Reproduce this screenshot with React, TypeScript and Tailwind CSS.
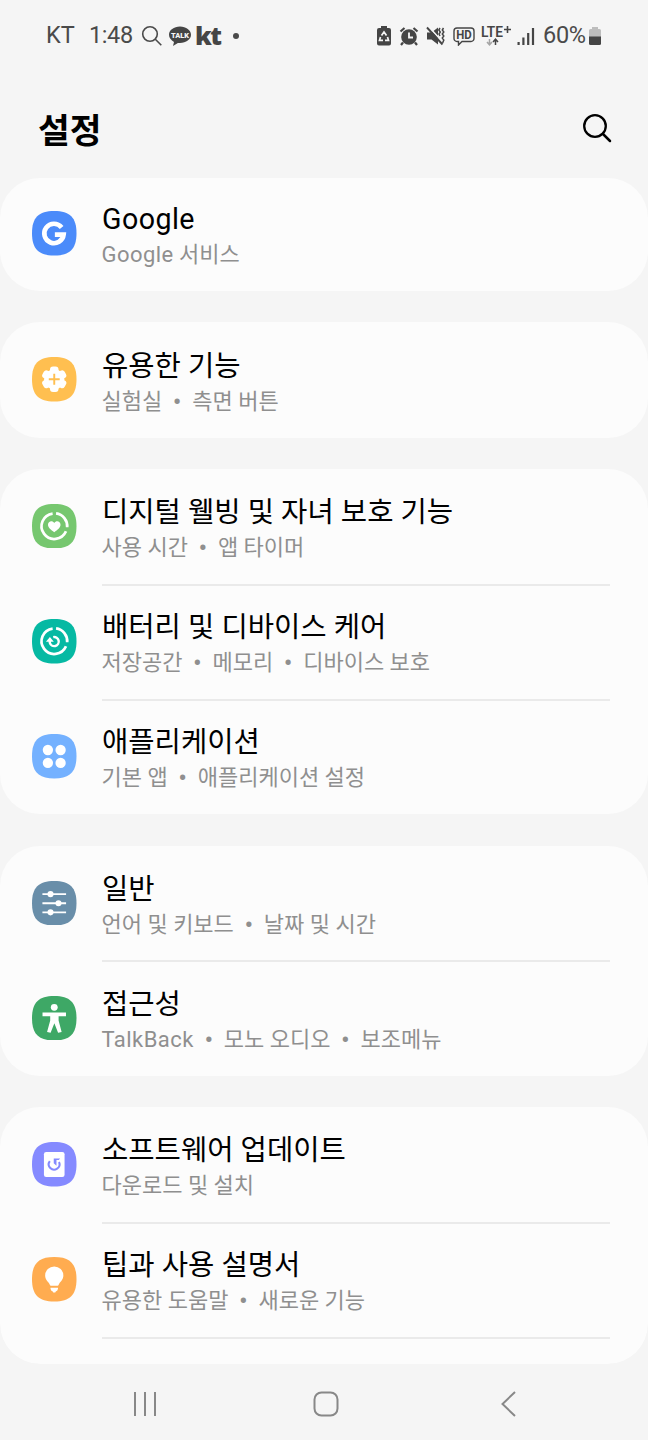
import type { ReactNode } from "react"

type SettingsItem = {
  title: string
  details: string[]
  color: string
  icon: ReactNode
}

const ring = (
  <g fill="none" stroke="#fff" strokeWidth="2.7">
    <path d="M20.4 9.500A12.600 12.600 0 1 0 33.600 27" />
    <path d="M23.800 9.300A12.800 12.800 0 0 1 34.800 23" />
  </g>
)

const googleIcon = (
  <path
    d="M29.300 16.300A9.600 9.600 0 1 0 31.300 23.300H22.600"
    fill="none"
    stroke="#fff"
    strokeWidth="4.6"
  />
)

const featuresIcon = (
  <>
    <g fill="#fff">
      <circle cx="22" cy="22" r="10" />
      <rect x="17.800" y="9.400" width="8.400" height="25.200" rx="3" />
      <rect x="17.800" y="9.400" width="8.400" height="25.200" rx="3" transform="rotate(60 22 22)" />
      <rect x="17.800" y="9.400" width="8.400" height="25.200" rx="3" transform="rotate(120 22 22)" />
    </g>
    <path d="M22 16.600v10.800M16.600 22h10.800" stroke="#ffbf50" strokeWidth="1.900" />
  </>
)

const wellbeingIcon = (
  <>
    {ring}
    <path
      d="M22 28c-3.2-2.3-6.2-4.600-6.200-7.400 0-3.700 4.400-4.700 6.200-1.800 1.800-2.900 6.200-1.900 6.200 1.800 0 2.800-3 5.100-6.200 7.400z"
      fill="#fff"
    />
  </>
)

const careIcon = (
  <>
    {ring}
    <path
      d="M21 17.900A4.500 4.500 0 1 1 17.600 23.500V21"
      fill="none"
      stroke="#fff"
      strokeWidth="2.4"
    />
    <path d="M13.800 22.600L17.700 17.800 21.600 22.600z" fill="#fff" />
  </>
)

const appsIcon = (
  <g fill="#fff">
    <circle cx="15.700" cy="15.800" r="5.100" />
    <circle cx="28.300" cy="15.800" r="5.100" />
    <circle cx="15.700" cy="28.600" r="5.100" />
    <circle cx="28.300" cy="28.600" r="5.100" />
  </g>
)

const generalIcon = (
  <g fill="#fff">
    <path
      d="M10.300 13H33.700M10.300 22H33.700M10.300 31H33.700"
      stroke="#fff"
      strokeWidth="1.800"
    />
    <circle cx="18.300" cy="13" r="3" />
    <circle cx="26.200" cy="22" r="3" />
    <circle cx="18.300" cy="31" r="3" />
  </g>
)

const accessibilityIcon = (
  <g fill="#fff">
    <circle cx="22" cy="11.200" r="3.400" />
    <path d="M10.400 16.200h23.200v3.800h-7.300v4.200l3 11.300-3.500.8-3.700-9.300-3.700 9.300-3.500-.8 3.100-11.300V20h-7.600z" />
  </g>
)

const updateIcon = (
  <>
    <rect x="11.800" y="9.800" width="20.400" height="24.800" rx="2.200" fill="#fff" />
    <path
      d="M17.600 18.900A5.300 5.300 0 1 0 26.700 19.800"
      fill="none"
      stroke="#858aff"
      strokeWidth="2"
    />
    <path d="M21.500 16.200h6.300l-1.300 1.700h-2.300v5.600l-2.700-2.600z" fill="#858aff" />
  </>
)

const tipsIcon = (
  <g fill="#fff">
    <path d="M22 9.300a9 9 0 0 0-9 9c0 3.800 2.300 5.500 4 7.800.7 1 .6 2.300 1.700 2.300h6.600c1.100 0 1-1.300 1.700-2.300 1.700-2.300 4-4 4-7.800a9 9 0 0 0-9-9z" />
    <path d="M18.300 30.300h7.400v1a3.200 3.200 0 0 1-2.200 2.700l-.5 1h-2l-.5-1a3.200 3.200 0 0 1-2.200-2.700z" />
  </g>
)

const groups: SettingsItem[][] = [
  [
    {
      title: "유용한 기능",
      details: ["실험실", "측면 버튼"],
      color: "#ffbf50",
      icon: featuresIcon,
    },
  ],
  [
    {
      title: "디지털 웰빙 및 자녀 보호 기능",
      details: ["사용 시간", "앱 타이머"],
      color: "#76c76f",
      icon: wellbeingIcon,
    },
    {
      title: "배터리 및 디바이스 케어",
      details: ["저장공간", "메모리", "디바이스 보호"],
      color: "#06b9a3",
      icon: careIcon,
    },
    {
      title: "애플리케이션",
      details: ["기본 앱", "애플리케이션 설정"],
      color: "#74b1ff",
      icon: appsIcon,
    },
  ],
  [
    {
      title: "일반",
      details: ["언어 및 키보드", "날짜 및 시간"],
      color: "#698ea9",
      icon: generalIcon,
    },
    {
      title: "접근성",
      details: ["TalkBack", "모노 오디오", "보조메뉴"],
      color: "#3ea866",
      icon: accessibilityIcon,
    },
  ],
]

const lastGroup: SettingsItem[] = [
  {
    title: "소프트웨어 업데이트",
    details: ["다운로드 및 설치"],
    color: "#858aff",
    icon: updateIcon,
  },
  {
    title: "팁과 사용 설명서",
    details: ["유용한 도움말", "새로운 기능"],
    color: "#ffac50",
    icon: tipsIcon,
  },
]

// Latin words are set slightly wider than the Hangul around them
function Label({ text }: { text: string }) {
  return text.split(/([A-Za-z]+)/).map((part, index) =>
    index % 2 === 1 ? (
      <span key={index} className="tracking-[0.450px]">
        {part}
      </span>
    ) : (
      part
    )
  )
}

function SettingsRow({ item, divider }: { item: SettingsItem; divider?: boolean }) {
  return (
    <div className="flex h-[115.200px] shrink-0 pl-8">
      <svg viewBox="0 0 44 44" className="mt-[35.100px] size-[44.500px] shrink-0">
        <path
          d="M22 0C37.500 0 44 6.500 44 22S37.500 44 22 44 0 37.500 0 22 6.500 0 22 0z"
          fill={item.color}
        />
        {item.icon}
      </svg>
      <div
        className={`mr-[38px] -mb-[1.600px] ml-[25px] flex-1 border-b-2 pt-[26.200px] whitespace-nowrap ${
          divider ? "border-[#eaeaea]" : "border-transparent"
        }`}
      >
        <div className="pl-[0.500px] text-[28.600px] leading-[35px] text-black">
          <Label text={item.title} />
        </div>
        <div className="flex text-[22px] leading-9 text-[#8f8f8f]">
          {item.details.map((detail, index) => (
            <span key={detail} className="flex">
              {index > 0 && (
                <span className="w-[30px] text-center text-[26px]">•</span>
              )}
              <span>
                <Label text={detail} />
              </span>
            </span>
          ))}
        </div>
      </div>
    </div>
  )
}

function Card({ items }: { items: SettingsItem[] }) {
  return (
    <section className="rounded-[40px] bg-[#fcfcfc]">
      {items.map((item, index) => (
        <SettingsRow key={item.title} item={item} divider={index < items.length - 1} />
      ))}
    </section>
  )
}

function StatusBar() {
  return (
    <div className="flex h-[72px] items-center pl-[46px] text-[24px] text-[#4a4a4a]">
      <span className="w-[43px] text-[23.500px]">KT</span>
      <span className="w-[52px] text-[23.500px] tracking-[-0.400px]">1:48</span>
      <svg viewBox="0 0 22 22" className="size-[22px]" fill="none" stroke="currentColor">
        <circle cx="9" cy="9" r="7.300" strokeWidth="1.600" />
        <path d="M14.300 14.300l6 6" strokeWidth="1.600" />
      </svg>
      <svg viewBox="0 0 24 22" className="ml-[5px] h-[22px] w-6">
        <path
          d="M12 1.500C5.900 1.500 1 5.100 1 9.800c0 3 2 5.600 5 7.100L5 21l4.900-3.100 2.100.1c6.100 0 11-3.600 11-8.200S18.100 1.500 12 1.500z"
          fill="#454545"
        />
        <text
          x="12"
          y="12.600"
          fontSize="8"
          fontWeight="900"
          textAnchor="middle"
          textLength="18"
          lengthAdjust="spacingAndGlyphs"
          fill="#f6f6f6"
        >
          TALK
        </text>
      </svg>
      <span className="ml-[3px] w-[38px] font-['Open_Sans'] text-[25.500px] leading-none font-extrabold tracking-[-1.500px] text-[#454545]">
        kt
      </span>
      <span className="size-1.5 rounded-full bg-[#4a4a4a]" />

      <div className="mr-[46px] ml-auto flex items-center text-[#454545]">
        <svg viewBox="0 0 16 20" className="h-5 w-4">
          <path d="M5 0h6v2h2a2 2 0 0 1 2 2v13.500a2 2 0 0 1-2 2H3a2 2 0 0 1-2-2V4a2 2 0 0 1 2-2h2z" fill="currentColor" />
          <path
            d="M5.500 9.500L8 6l2.500 3.500M11.500 11l1 3.300H9M7 14.300H3.500l1-3.300"
            fill="none"
            stroke="#f6f6f6"
            strokeWidth="1.700"
          />
        </svg>
        <svg viewBox="0 0 20 20" className="ml-[7px] size-5" fill="none" stroke="currentColor">
          <circle cx="10" cy="11" r="7.800" fill="currentColor" stroke="none" />
          <path d="M1.500 5.500l4-3.500M18.500 5.500l-4-3.500M4 16.500l-2 2.500M16 16.500l2 2.500" strokeWidth="2.200" />
          <path d="M10 6.500v5h4" stroke="#f6f6f6" strokeWidth="1.800" />
        </svg>
        <svg viewBox="0 0 20 20" className="ml-[7px] size-5">
          <path d="M1 6.500h4.500l6.500-5v17l-6.500-5H1z" fill="currentColor" />
          <path d="M3 1l14.500 16" stroke="#f6f6f6" strokeWidth="1.800" />
          <path d="M1 1.500l15.500 17" stroke="currentColor" strokeWidth="1.900" />
          <path
            d="M14 2l-1.200 2 1.500 2-1.300 2 1 2M17.500 2l-1.200 2 1.500 2-1.500 2 1.500 2-1.500 2 1.500 2-1.200 3"
            fill="none"
            stroke="currentColor"
            strokeWidth="1.500"
          />
        </svg>
        <svg viewBox="0 0 22 20" className="ml-[7px] h-5 w-[22px]">
          <path
            d="M4 2h14a3 3 0 0 1 3 3v7.500a3 3 0 0 1-3 3H9L5.500 19v-3.500H4a3 3 0 0 1-3-3V5a3 3 0 0 1 3-3z"
            fill="none"
            stroke="currentColor"
            strokeWidth="1.400"
          />
          <text
            x="11"
            y="13"
            fontSize="12"
            fontWeight="700"
            textAnchor="middle"
            textLength="15.500"
            lengthAdjust="spacingAndGlyphs"
            fill="currentColor"
          >
            HD
          </text>
        </svg>
        <svg viewBox="0 0 32 24" className="ml-1.5 h-6 w-8">
          <text
            x="0"
            y="13"
            fontSize="14.500"
            fontWeight="600"
            textLength="22"
            lengthAdjust="spacingAndGlyphs"
            fill="currentColor"
          >
            LTE
          </text>
          <path d="M23 5.500h7M26.500 2v7" stroke="currentColor" strokeWidth="1.600" />
          <path d="M8.500 15v5.500M6 18l2.500 2.800L11 18" fill="none" stroke="#a5a5a5" strokeWidth="1.500" />
          <path d="M14.500 21v-5.500M12 18l2.500-2.800L17 18" fill="none" stroke="currentColor" strokeWidth="1.500" />
        </svg>
        <svg viewBox="0 0 18 20" className="ml-1 h-5 w-[18px]" fill="currentColor">
          <rect x="0.500" y="16" width="2.200" height="3" />
          <rect x="5.300" y="11.500" width="2.200" height="7.500" />
          <rect x="10.100" y="7" width="2.200" height="12" />
          <rect x="14.900" y="2" width="2.200" height="17" />
        </svg>
        <span className="ml-2 w-[44px] text-[23.500px] tracking-[-0.300px] text-[#4a4a4a]">60%</span>
        <svg viewBox="0 0 14 20" className="ml-px h-5 w-[14px]">
          <path d="M4 1h6v2h1.500A1.500 1.500 0 0 1 13 4.500V11H1V4.500A1.500 1.500 0 0 1 2.500 3H4z" fill="#bdbdbd" />
          <path d="M1 10.500h12v7a1.500 1.500 0 0 1-1.500 1.500h-9A1.500 1.500 0 0 1 1 17.500z" fill="#454545" />
        </svg>
      </div>
    </div>
  )
}

function NavigationBar() {
  return (
    <nav className="flex h-[76px] items-center pt-1 text-[#888]">
      <svg viewBox="0 0 24 26" className="ml-[133px] h-[26px] w-6" stroke="currentColor" strokeWidth="2">
        <path d="M2 1v24M12 1v24M22 1v24" />
      </svg>
      <svg viewBox="0 0 26 26" className="ml-[156px] size-[26px]" fill="none" stroke="currentColor" strokeWidth="2">
        <rect x="1.500" y="1.500" width="23" height="23" rx="7" />
      </svg>
      <svg viewBox="0 0 16 26" className="ml-[161px] h-[26px] w-4" fill="none" stroke="currentColor" strokeWidth="2">
        <path d="M15 1L2.500 13 15 25" />
      </svg>
    </nav>
  )
}

export default function App() {
  return (
    <main className="flex h-[1440px] w-[648px] flex-col overflow-hidden bg-[#f5f5f5] font-[Roboto,'Noto_Sans_CJK_KR',sans-serif]">
      <StatusBar />
      <header className="flex h-[106px] shrink-0 items-center justify-between pr-9 pl-[38px]">
        <h1 className="pt-[13px] text-[34.500px] leading-none font-bold text-black">설정</h1>
        <svg viewBox="0 0 30 30" className="mt-1.5 size-[30px]" fill="none" stroke="#000" strokeLinecap="round">
          <circle cx="13" cy="13" r="10.800" strokeWidth="2.300" />
          <path d="M21 21l7 7" strokeWidth="2.500" />
        </svg>
      </header>

      <div className="flex flex-1 flex-col gap-[31.200px] overflow-hidden rounded-b-[40px]">
        <section className="flex h-[113.200px] shrink-0 flex-col justify-end overflow-hidden rounded-[40px] bg-[#fcfcfc]">
          <SettingsRow
            item={{
              title: "Google",
              details: ["Google 서비스"],
              color: "#4b8bfa",
              icon: googleIcon,
            }}
          />
        </section>
        {groups.map((items) => (
          <Card key={items[0].title} items={items} />
        ))}
        <section className="flex-1 rounded-[40px] bg-[#fcfcfc]">
          {lastGroup.map((item) => (
            <SettingsRow key={item.title} item={item} divider />
          ))}
        </section>
      </div>
      <NavigationBar />
    </main>
  )
}
